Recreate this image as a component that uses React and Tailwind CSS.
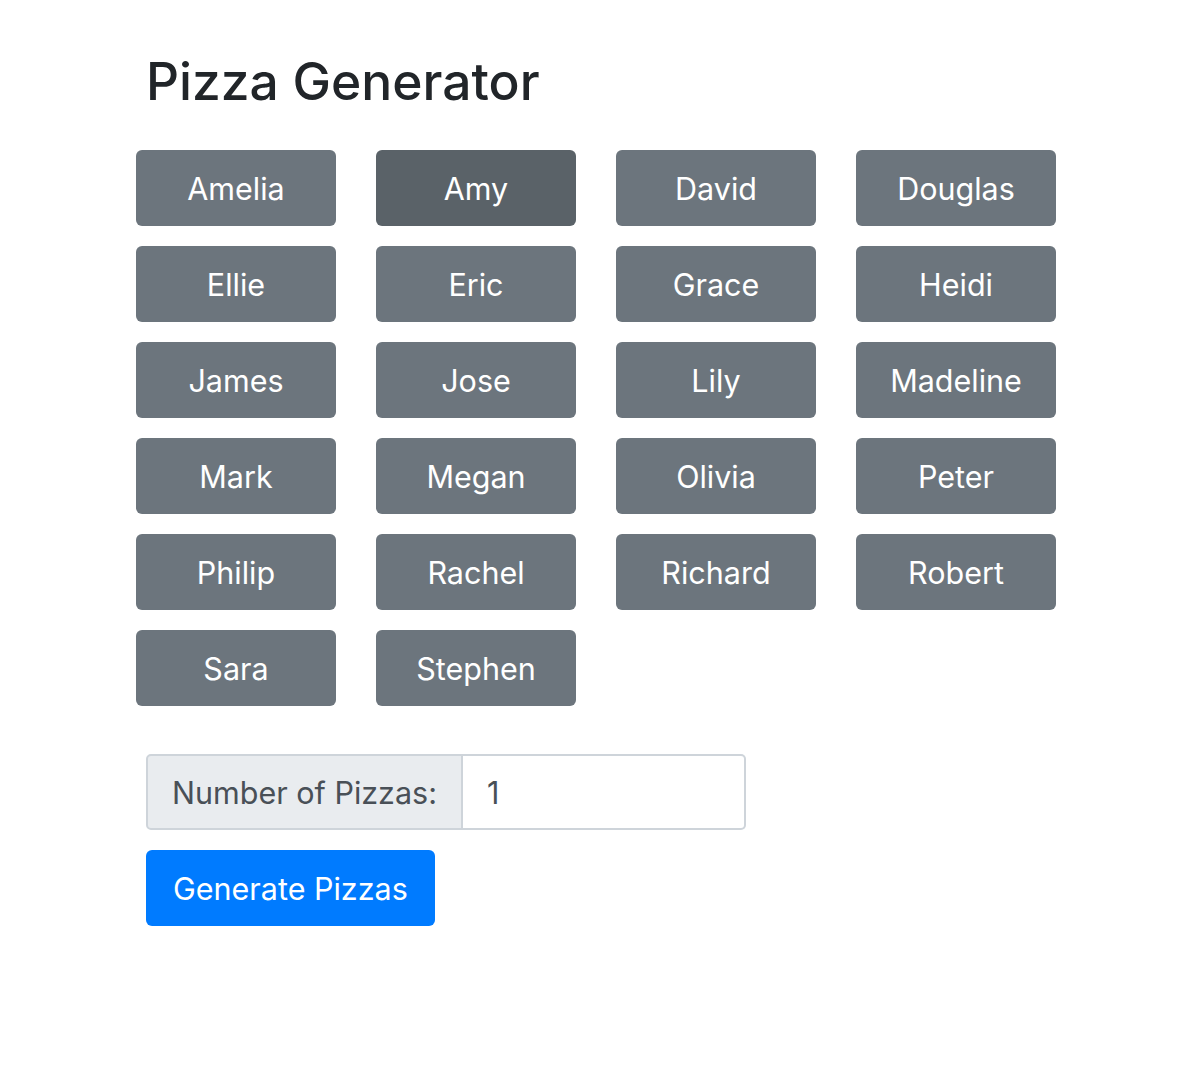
import React from "react";

const names = [
    "Amelia", "Amy", "David", "Douglas",
    "Ellie", "Eric", "Grace", "Heidi",
    "James", "Jose", "Lily", "Madeline",
    "Mark", "Megan", "Olivia", "Peter",
    "Philip", "Rachel", "Richard", "Robert",
    "Sara", "Stephen",
];

export default function App() {
    return (
        <div className="min-h-[1076px] bg-white font-['Inter',sans-serif] text-[#212529]">
            <div className="pl-[136px] pt-[51px]">
                <h1 className="pl-[10px] text-[51.5px] leading-[60px] font-medium">Pizza Generator</h1>

                <div className="mt-[39px] grid grid-cols-[repeat(4,200px)] gap-x-[40px] gap-y-[20px]">
                    {names.map((name) => (
                        <button
                            key={name}
                            className={
                                name === "Amy"
                                    ? "h-[76px] rounded-[6px] bg-[#5a6268] pt-[2px] text-[30.5px] text-white"
                                    : "h-[76px] rounded-[6px] bg-[#6c757d] pt-[2px] text-[30.5px] text-white"
                            }
                        >
                            {name}
                        </button>
                    ))}
                </div>

                <div className="ml-[10px] mt-[48px] flex h-[76px] w-[600px]">
                    <div className="flex items-center rounded-l-[5px] border-2 border-[#ced4da] bg-[#e9ecef] px-[24px] pt-[2px] text-[30.5px] text-[#495057]">
                        Number of Pizzas:
                    </div>
                    <div className="flex flex-1 items-center rounded-r-[5px] border-2 border-l-0 border-[#ced4da] px-[24px] pt-[2px] text-[30.5px] text-[#495057]">
                        1
                    </div>
                </div>

                <button className="ml-[10px] mt-[20px] h-[76px] rounded-[6px] bg-[#007bff] px-[27px] pt-[2px] text-[30.5px] text-white">
                    Generate Pizzas
                </button>
            </div>
        </div>
    );
}
